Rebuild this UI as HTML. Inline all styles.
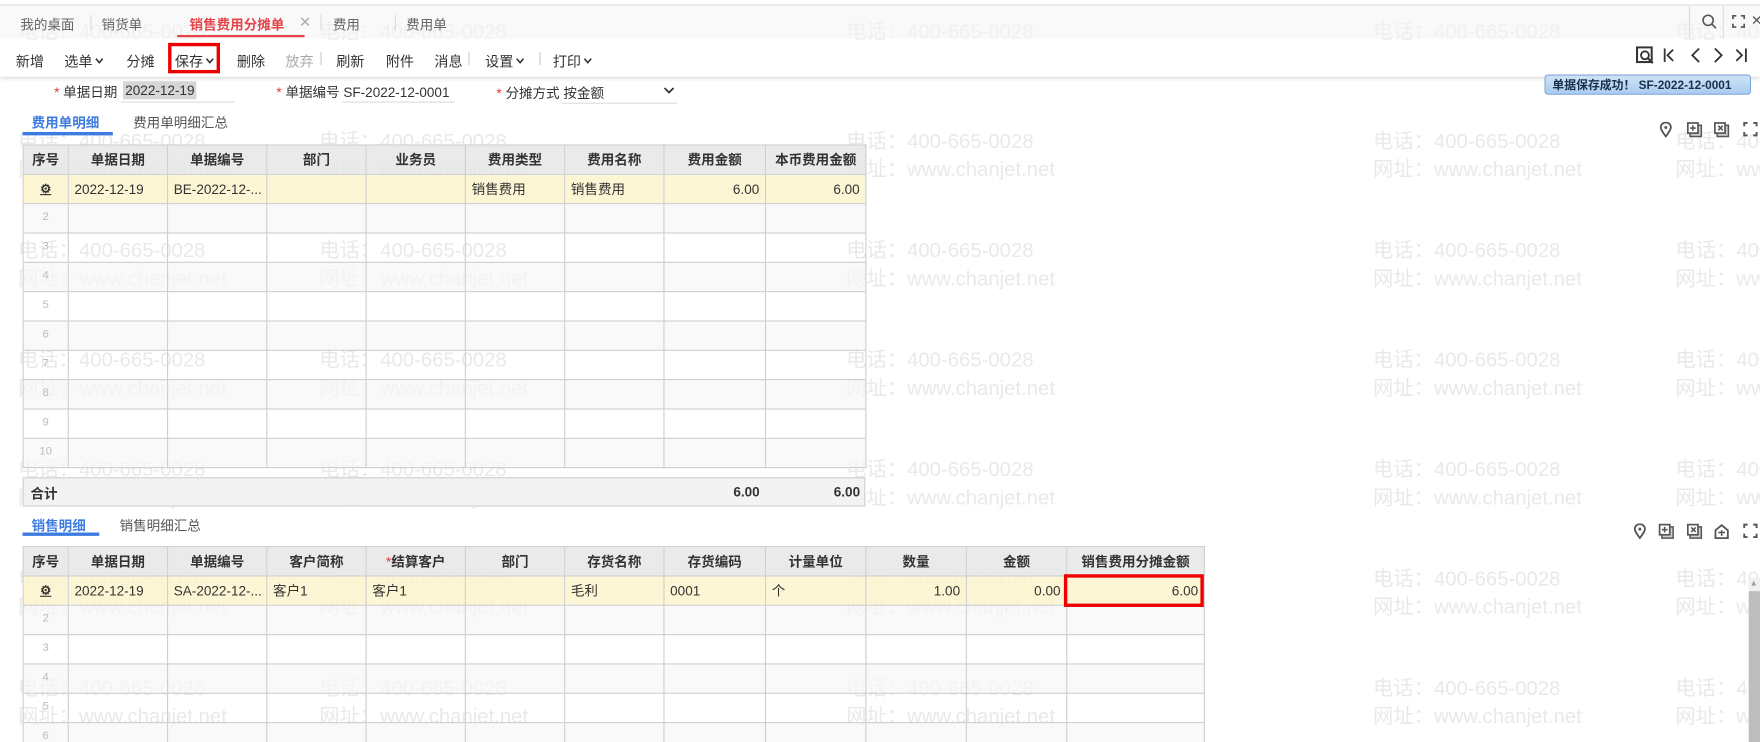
<!DOCTYPE html>
<html><head><meta charset="utf-8">
<style>
html,body{margin:0;padding:0;width:1760px;height:742px;overflow:hidden;background:#fff}
#w{position:absolute;left:0;top:0;width:1560px;height:658px;overflow:hidden;transform:scale(1.12821);transform-origin:0 0;font-family:"Liberation Sans","Noto Sans CJK SC",sans-serif;font-size:12px;color:#333}
.a{position:absolute;white-space:nowrap}
.wm{position:absolute;color:#e9e9e9;font-size:18px;line-height:25px;white-space:nowrap}
table{border-collapse:collapse;table-layout:fixed;position:absolute;background:transparent}
td,th{border:1px solid #cfcfcf;height:25px;line-height:14px;padding:0 5px;font-size:12px;overflow:hidden;white-space:nowrap}
th{background:rgba(232,232,232,.9);font-weight:bold;color:#333}
tr.y td{background:rgba(253,245,205,.85)}
tr.g td{background:rgba(246,246,246,.7)}
td.n{color:#bbb;font-size:10px;text-align:center;vertical-align:top;padding-top:5px;height:20px}
td.r{text-align:right}
.tb span{position:absolute;top:44px;white-space:nowrap}
.cv{display:inline-block;width:8px;height:6px;margin-left:2px;vertical-align:2px}
</style></head><body><div id="w">
<div id="wms"></div>
<script>
var h='';var cols=[16,283,750,1217,1485];
for(var r=0;r<7;r++){for(var c=0;c<cols.length;c++){var y=16+r*97;h+='<div class="wm" style="left:'+cols[c]+'px;top:'+y+'px">电话：400-665-0028<br>网址：www.chanjet.net</div>';}}
document.getElementById('wms').innerHTML=h;
var cv='<svg class="cv" viewBox="0 0 8 6"><path d="M1 1L4 4.5L7 1" fill="none" stroke="#333" stroke-width="1.4"/></svg>';
</script>
<!-- top tab bar -->
<div class="a" style="left:0;top:4px;width:1560px;height:1px;background:#ddd"></div>
<div class="a" style="left:0;top:5px;width:1560px;height:29px;background:rgba(245,245,245,.6)"></div>
<div class="a" style="left:18px;top:13px;color:#666">我的桌面</div>
<div class="a" style="left:80px;top:13px;width:1px;height:14px;background:#ddd"></div>
<div class="a" style="left:90px;top:13px;color:#666">销货单</div>
<div class="a" style="left:168px;top:13px;color:#e5454a;font-weight:bold">销售费用分摊单</div>
<div class="a" style="left:265px;top:12px;color:#aaa;font-size:13px">✕</div>
<div class="a" style="left:157px;top:31px;width:113px;height:2px;background:#e5454a"></div>
<div class="a" style="left:284px;top:13px;width:1px;height:14px;background:#ddd"></div>
<div class="a" style="left:295px;top:13px;color:#666">费用</div>
<div class="a" style="left:350px;top:13px;width:1px;height:14px;background:#ddd"></div>
<div class="a" style="left:360px;top:13px;color:#666">费用单</div>
<div class="a" style="left:1497px;top:5px;width:1px;height:29px;background:#ddd"></div>
<div class="a" style="left:1527px;top:5px;width:1px;height:29px;background:#ddd"></div>
<svg class="a" style="left:1508px;top:12px" width="14" height="14"><circle cx="6" cy="6" r="4.5" fill="none" stroke="#555" stroke-width="1.4"/><path d="M9.5 9.5L13 13" stroke="#555" stroke-width="1.5"/></svg>
<svg class="a" style="left:1535px;top:13px" width="12" height="12"><path d="M1 4V1H4M8 1H11V4M11 8V11H8M4 11H1V8" fill="none" stroke="#555" stroke-width="1.5"/></svg>
<div class="a" style="left:1552px;top:11px;color:#555;font-size:12px">✕</div>
<!-- toolbar -->
<div class="a" style="left:0;top:35px;width:1560px;height:33px;background:#fff;box-shadow:0 2px 3px rgba(0,0,0,.12)"></div>
<div class="tb" id="tb" style="position:absolute;left:0;top:0;font-size:12.5px;color:#333"></div>
<script>
document.getElementById('tb').innerHTML='<span style="left:14px">新增</span><span style="left:57px">选单'+cv+'</span><span style="left:112px">分摊</span>'+
'<span style="left:155px">保存'+cv+'</span><span style="left:210px">删除</span><span style="left:253px;color:#aaa">放弃</span>'+
'<span style="left:283px;color:#ccc">|</span><span style="left:298px">刷新</span><span style="left:342px">附件</span><span style="left:385px">消息</span>'+
'<span style="left:414px;color:#ccc">|</span><span style="left:430px">设置'+cv+'</span><span style="left:477px;color:#ccc">|</span><span style="left:490px">打印'+cv+'</span>';
</script>
<div class="a" style="left:149px;top:38px;width:40px;height:21px;border:3px solid #e00;box-sizing:content-box"></div>
<svg class="a" style="left:1450px;top:41px" width="16" height="16"><rect x="1" y="1" width="13" height="13" fill="none" stroke="#333" stroke-width="1.8"/><circle cx="8" cy="8" r="3.5" fill="#fff" stroke="#333" stroke-width="1.6"/><path d="M10.5 10.5L15 15" stroke="#333" stroke-width="1.8"/></svg>
<svg class="a" style="left:1474px;top:42px" width="12" height="14"><path d="M1.5 1V13M9 2L4 7L9 12" fill="none" stroke="#333" stroke-width="1.6"/></svg>
<svg class="a" style="left:1497px;top:42px" width="12" height="14"><path d="M9 1L3 7L9 13" fill="none" stroke="#333" stroke-width="1.6"/></svg>
<svg class="a" style="left:1517px;top:42px" width="12" height="14"><path d="M3 1L9 7L3 13" fill="none" stroke="#333" stroke-width="1.6"/></svg>
<svg class="a" style="left:1537px;top:42px" width="12" height="14"><path d="M2 2L7 7L2 12M10.5 1V13" fill="none" stroke="#333" stroke-width="1.6"/></svg>
<!-- toast -->
<div class="a" style="left:1369px;top:66px;width:183px;height:18px;border:1px solid #7aa6d6;border-radius:3px;background:linear-gradient(#cfe3f7,#a9ccf0);box-sizing:border-box"></div>
<div class="a" style="left:1376px;top:68px;font-weight:bold;font-size:10.5px;color:#1b2f4a">单据保存成功！ SF-2022-12-0001</div>
<!-- form -->
<div class="a" style="left:48px;top:73px"><span style="color:#e33">*</span> 单据日期</div>
<div class="a" style="left:109px;top:72px;background:#d6d6d6;padding:1px 2px">2022-12-19</div>
<div class="a" style="left:107px;top:90px;width:101px;height:1px;background:#ddd"></div>
<div class="a" style="left:245px;top:73px"><span style="color:#e33">*</span> 单据编号 SF-2022-12-0001</div>
<div class="a" style="left:303px;top:90px;width:100px;height:1px;background:#ddd"></div>
<div class="a" style="left:440px;top:74px"><span style="color:#e33">*</span> 分摊方式 按金额</div>
<div class="a" style="left:498px;top:91px;width:102px;height:1px;background:#ddd"></div>
<svg class="a" style="left:588px;top:76px" width="10" height="8"><path d="M1 2L5 6L9 2" fill="none" stroke="#333" stroke-width="1.5"/></svg>
<!-- subtabs 1 -->
<div class="a" style="left:28px;top:100px;color:#3d7be0;font-weight:bold">费用单明细</div>
<div class="a" style="left:118px;top:100px;color:#555">费用单明细汇总</div>
<div class="a" style="left:20px;top:117px;width:80px;height:3px;background:#3d7be0"></div>
<!-- icons row 1 -->
<svg class="a" style="left:1471px;top:108px" width="11" height="14"><path d="M5.5 13C2 8 1 6.5 1 5A4.5 4.5 0 0 1 10 5C10 6.5 9 8 5.5 13Z" fill="none" stroke="#555" stroke-width="1.6"/><circle cx="5.5" cy="5" r="1.3" fill="#555"/></svg>
<svg class="a" style="left:1495px;top:108px" width="14" height="14"><rect x="3" y="3" width="10" height="10" fill="#ccc" stroke="#555" stroke-width="1.3"/><rect x="1" y="1" width="9" height="9" fill="#fff" stroke="#555" stroke-width="1.5"/><path d="M5.5 3V8M3 5.5H8" stroke="#555" stroke-width="1.4"/></svg>
<svg class="a" style="left:1519px;top:108px" width="14" height="14"><rect x="3" y="3" width="10" height="10" fill="#ccc" stroke="#555" stroke-width="1.3"/><rect x="1" y="1" width="9" height="9" fill="#fff" stroke="#555" stroke-width="1.5"/><path d="M4 3.5L8 7.5M8 3.5L4 7.5" stroke="#555" stroke-width="1.4"/></svg>
<svg class="a" style="left:1545px;top:108px" width="13" height="13"><path d="M1 4V1H4M9 1H12V4M12 9V12H9M4 12H1V9" fill="none" stroke="#555" stroke-width="1.7"/></svg>
<!-- table 1 -->
<table style="left:20px;top:128px;width:747px">
<colgroup><col style="width:40px"><col style="width:88px"><col style="width:88px"><col style="width:88px"><col style="width:88px"><col style="width:88px"><col style="width:88px"><col style="width:90px"><col style="width:89px"></colgroup>
<tr><th>序号</th><th>单据日期</th><th>单据编号</th><th>部门</th><th>业务员</th><th>费用类型</th><th>费用名称</th><th>费用金额</th><th>本币费用金额</th></tr>
<tr class="y"><td style="text-align:center;font-weight:bold;font-size:11px"><u>⚙</u></td><td>2022-12-19</td><td>BE-2022-12-...</td><td></td><td></td><td>销售费用</td><td>销售费用</td><td class="r">6.00</td><td class="r">6.00</td></tr>
<tr class="g"><td class="n">2</td><td></td><td></td><td></td><td></td><td></td><td></td><td></td><td></td></tr>
<tr><td class="n">3</td><td></td><td></td><td></td><td></td><td></td><td></td><td></td><td></td></tr>
<tr class="g"><td class="n">4</td><td></td><td></td><td></td><td></td><td></td><td></td><td></td><td></td></tr>
<tr><td class="n">5</td><td></td><td></td><td></td><td></td><td></td><td></td><td></td><td></td></tr>
<tr class="g"><td class="n">6</td><td></td><td></td><td></td><td></td><td></td><td></td><td></td><td></td></tr>
<tr><td class="n">7</td><td></td><td></td><td></td><td></td><td></td><td></td><td></td><td></td></tr>
<tr class="g"><td class="n">8</td><td></td><td></td><td></td><td></td><td></td><td></td><td></td><td></td></tr>
<tr><td class="n">9</td><td></td><td></td><td></td><td></td><td></td><td></td><td></td><td></td></tr>
<tr class="g"><td class="n">10</td><td></td><td></td><td></td><td></td><td></td><td></td><td></td><td></td></tr>
</table>
<div class="a" style="left:20px;top:423px;width:747px;height:26px;background:rgba(242,242,242,.95);border:1px solid #cfcfcf;box-sizing:border-box"></div>
<div class="a" style="left:27px;top:429px;font-weight:bold">合计</div>
<div class="a" style="left:650px;top:429px;font-weight:bold">6.00</div>
<div class="a" style="left:739px;top:429px;font-weight:bold">6.00</div>
<!-- subtabs 2 -->
<div class="a" style="left:28px;top:457px;color:#3d7be0;font-weight:bold">销售明细</div>
<div class="a" style="left:106px;top:457px;color:#555">销售明细汇总</div>
<div class="a" style="left:20px;top:472px;width:68px;height:3px;background:#3d7be0"></div>
<!-- icons row 2 -->
<svg class="a" style="left:1448px;top:464px" width="11" height="14"><path d="M5.5 13C2 8 1 6.5 1 5A4.5 4.5 0 0 1 10 5C10 6.5 9 8 5.5 13Z" fill="none" stroke="#555" stroke-width="1.6"/><circle cx="5.5" cy="5" r="1.3" fill="#555"/></svg>
<svg class="a" style="left:1470px;top:464px" width="14" height="14"><rect x="3" y="3" width="10" height="10" fill="#ccc" stroke="#555" stroke-width="1.3"/><rect x="1" y="1" width="9" height="9" fill="#fff" stroke="#555" stroke-width="1.5"/><path d="M5.5 3V8M3 5.5H8" stroke="#555" stroke-width="1.4"/></svg>
<svg class="a" style="left:1495px;top:464px" width="14" height="14"><rect x="3" y="3" width="10" height="10" fill="#ccc" stroke="#555" stroke-width="1.3"/><rect x="1" y="1" width="9" height="9" fill="#fff" stroke="#555" stroke-width="1.5"/><path d="M4 3.5L8 7.5M8 3.5L4 7.5" stroke="#555" stroke-width="1.4"/></svg>
<svg class="a" style="left:1519px;top:464px" width="14" height="14"><path d="M1.5 13V6L7 1.5L12.5 6V13Z" fill="none" stroke="#555" stroke-width="1.6"/><path d="M4 8H10M7 6V11" stroke="#555" stroke-width="1.4"/></svg>
<svg class="a" style="left:1545px;top:464px" width="13" height="13"><path d="M1 4V1H4M9 1H12V4M12 9V12H9M4 12H1V9" fill="none" stroke="#555" stroke-width="1.7"/></svg>
<!-- table 2 -->
<table style="left:20px;top:484px;width:1047px">
<colgroup><col style="width:40px"><col style="width:88px"><col style="width:88px"><col style="width:88px"><col style="width:88px"><col style="width:88px"><col style="width:88px"><col style="width:90px"><col style="width:89px"><col style="width:89px"><col style="width:89px"><col style="width:122px"></colgroup>
<tr><th>序号</th><th>单据日期</th><th>单据编号</th><th>客户简称</th><th><span style="color:#e33;font-weight:normal">*</span>结算客户</th><th>部门</th><th>存货名称</th><th>存货编码</th><th>计量单位</th><th>数量</th><th>金额</th><th>销售费用分摊金额</th></tr>
<tr class="y"><td style="text-align:center;font-weight:bold;font-size:11px"><u>⚙</u></td><td>2022-12-19</td><td>SA-2022-12-...</td><td>客户1</td><td>客户1</td><td></td><td>毛利</td><td>0001</td><td>个</td><td class="r">1.00</td><td class="r">0.00</td><td class="r">6.00</td></tr>
<tr class="g"><td class="n">2</td><td></td><td></td><td></td><td></td><td></td><td></td><td></td><td></td><td></td><td></td><td></td></tr>
<tr><td class="n">3</td><td></td><td></td><td></td><td></td><td></td><td></td><td></td><td></td><td></td><td></td><td></td></tr>
<tr class="g"><td class="n">4</td><td></td><td></td><td></td><td></td><td></td><td></td><td></td><td></td><td></td><td></td><td></td></tr>
<tr><td class="n">5</td><td></td><td></td><td></td><td></td><td></td><td></td><td></td><td></td><td></td><td></td><td></td></tr>
<tr class="g"><td class="n">6</td><td></td><td></td><td></td><td></td><td></td><td></td><td></td><td></td><td></td><td></td><td></td></tr>
</table>
<div class="a" style="left:943px;top:509px;width:118px;height:23px;border:3px solid #e00"></div>
<!-- scrollbar -->
<div class="a" style="left:1550px;top:512px;width:10px;height:150px;background:#f0f0f0"></div>
<div class="a" style="left:1551px;top:514px;font-size:7px;color:#999">▲</div>
<div class="a" style="left:1550px;top:524px;width:10px;height:140px;background:#bdbdbd"></div>
</div></body></html>
